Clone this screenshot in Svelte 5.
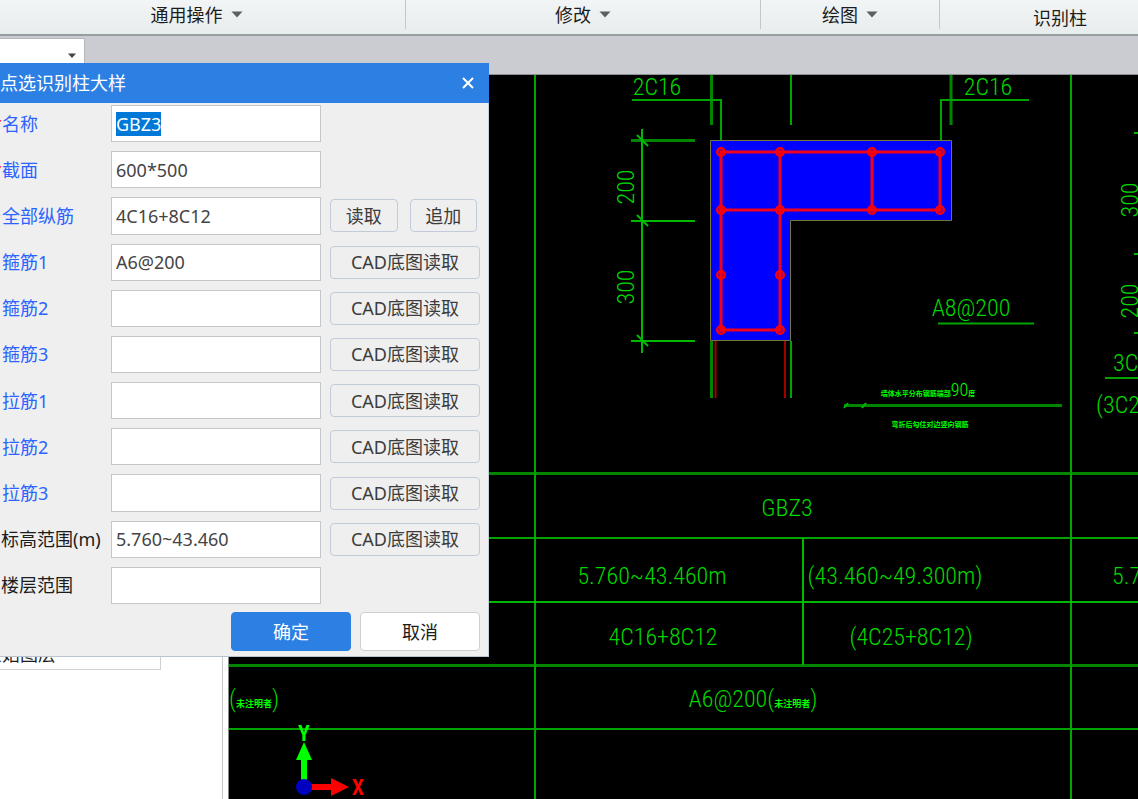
<script>
  const groups = [
    { name: '通用操作', menu: true },
    { name: '修改', menu: true },
    { name: '绘图', menu: true },
    { name: '识别柱', menu: false }
  ];

  const read = ['CAD底图读取'];
  let fields = $state([
    { id: 'name', label: '名称', required: true, value: 'GBZ3', actions: [] },
    { id: 'section', label: '截面', required: true, value: '600*500', actions: [] },
    { id: 'bars', label: '全部纵筋', value: '4C16+8C12', actions: ['读取', '追加'] },
    { id: 'stirrup1', label: '箍筋1', value: 'A6@200', actions: read },
    { id: 'stirrup2', label: '箍筋2', value: '', actions: read },
    { id: 'stirrup3', label: '箍筋3', value: '', actions: read },
    { id: 'tie1', label: '拉筋1', value: '', actions: read },
    { id: 'tie2', label: '拉筋2', value: '', actions: read },
    { id: 'tie3', label: '拉筋3', value: '', actions: read },
    { id: 'elevation', label: '标高范围(m)', plain: true, value: '5.760~43.460', actions: read },
    { id: 'floors', label: '楼层范围', plain: true, value: '', actions: [] }
  ]);

  const rebars = [
    [721, 152], [780, 152], [872, 152], [940, 152],
    [721, 210], [780, 210], [872, 210], [940, 210],
    [721, 275], [780, 275], [721, 330], [780, 330]
  ];

  // The name is selected when the dialog opens
  function selectAll(node, active) {
    if (active) {
      node.focus();
      node.select();
    }
  }
</script>

<div class="app">
  <header class="ribbon">
    {#each groups as g}
      <div class="group" class:low={!g.menu}>
        {#if g.menu}
          <button type="button">{g.name}
            <svg width="12" height="7" viewBox="0 0 12 7" aria-hidden="true"><path d="M0.5 0.5h11L6 6.5z" fill="#5d5f61" /></svg>
          </button>
        {:else}
          <span>{g.name}</span>
        {/if}
      </div>
    {/each}
  </header>

  <div class="toolbar">
    <div class="combo">
      <select aria-label="楼层"><option value=""></option></select>
      <svg width="8" height="5" viewBox="0 0 8 5" aria-hidden="true"><path d="M0 0.5h8L4 5z" fill="#444" /></svg>
    </div>
  </div>

  <main>
    <aside><div class="layer">原始图层</div></aside>
    <svg class="cad" viewBox="229 75 909 724" preserveAspectRatio="xMinYMin slice" role="img" aria-label="GBZ3">
      <g class="wide">
        <path d="M229 473.5H1138M229 665.5H1138M711.5 75V125M951 75V125M711.5 341V398M844 405.5H1062M631 140.5H695" />
      </g>
      <g class="line">
        <path d="M229 538H1138M229 729H1138M535 75V799M1071 75V799M791 75V125M791 341V398" />
        <path d="M632 100H721V140M1029 100H941V140M938 323.5H1034M1105 378H1138" />
      </g>
      <g class="hair">
        <path d="M229 602H1138M803 538V665M642 129V353M631 221H695M631 341H695" />
        <path d="M637 135L648 146M637 215L648 226M637 335L648 346M844 408L848 403M862 408L866 403M1134 133H1138M1134 254H1138M1134 333H1138" />
      </g>

      <path d="M715.5 341V398M785 341V398" stroke="#a00000" stroke-width="2" />
      <path d="M710.5 140.5H951.5V220.5H790.5V340.5H710.5z" fill="#0000ff" stroke="#77773c" />
      <g fill="none" stroke="#f0001c" stroke-width="3">
        <path d="M721 152H940V210H721zM721 152V330H780V152M872 152V210" />
      </g>
      {#each rebars as [x, y]}
        <circle cx={x} cy={y} r="4" fill="#ff0000" fill-opacity="0.6" stroke="#ff0000" stroke-width="2" />
      {/each}

      <g class="text">
        <text x="657" y="95">2C16</text>
        <text x="988" y="95">2C16</text>
        <text transform="translate(634 187) rotate(-90)">200</text>
        <text transform="translate(634 287) rotate(-90)">300</text>
        <text transform="translate(1138 200) rotate(-90)">300</text>
        <text transform="translate(1138 301) rotate(-90)">200</text>
        <text x="971" y="316">A8@200</text>
        <text class="start" x="1113" y="371">3C16</text>
        <text class="start" x="1096" y="413">(3C25)</text>
        <text x="787" y="516">GBZ3</text>
        <text x="652" y="584">5.760~43.460m</text>
        <text x="895" y="584">(43.460~49.300m)</text>
        <text class="start" x="1112" y="584">5.760~43.460m</text>
        <text x="663" y="645">4C16+8C12</text>
        <text x="911" y="645">(4C25+8C12)</text>
        <text x="753" y="707">A6@200(<tspan class="cn">未注明者</tspan>)</text>
        <text x="254" y="707">(<tspan class="cn">未注明者</tspan>)</text>
      </g>
      <g class="note">
        <text x="928" y="396">墙体水平分布钢筋端部<tspan class="num">90</tspan>度</text>
        <text x="930" y="427">弯折后勾住对边竖向钢筋</text>
      </g>

      <path d="M301 782V760H296L304 742L312 760H307V782z" fill="#00ff00" />
      <path d="M309 784H331V778L349 787L331 796V790H309z" fill="#ff0000" />
      <circle cx="304" cy="787" r="8" fill="#0000c0" />
      <text class="axis" x="304" y="741" fill="#00ff00">Y</text>
      <text class="axis" x="358" y="795" fill="#ff0000">X</text>
    </svg>
  </main>

  <form class="dialog" aria-labelledby="dlg-title" onsubmit={(e) => e.preventDefault()}>
    <div class="title">
      <h1 id="dlg-title">点选识别柱大样</h1>
      <button type="button" aria-label="关闭">
        <svg width="12" height="12" viewBox="0 0 12 12" aria-hidden="true"><path d="M1 1L11 11M11 1L1 11" stroke="#fff" stroke-width="2" /></svg>
      </button>
    </div>
    <div class="fields">
      {#each fields as f, i}
        <div class="row">
          <label for={f.id} class:plain={f.plain}><i>{f.required ? '*' : ''}</i>{f.label}</label>
          <input id={f.id} type="text" autocomplete="off" spellcheck="false" bind:value={f.value} use:selectAll={i === 0} />
          <div class="actions" class:pair={f.actions.length > 1}>
            {#each f.actions as a}<button type="button">{a}</button>{/each}
          </div>
        </div>
      {/each}
    </div>
    <div class="footer">
      <button type="submit" class="ok">确定</button>
      <button type="button" class="cancel">取消</button>
    </div>
  </form>
</div>

<style>
  :global(body) {
    margin: 0;
  }
  .app {
    position: relative;
    display: flex;
    flex-direction: column;
    height: 100vh;
    overflow: hidden;
    font: 18px/24px 'Noto Sans', 'Noto Sans CJK SC', sans-serif;
    color: #1c1c1c;
    background: #caccd1;
  }
  button,
  input,
  select {
    font: inherit;
    box-sizing: border-box;
  }

  .ribbon {
    display: grid;
    grid-template-columns: 418px 355px 179px 1fr;
    height: 34px;
    margin: 0 -43px 0 -12px;
    background: linear-gradient(#f2f5f6, #e7ecec);
    border-bottom: 2px solid #989da0;
    flex: none;
  }
  .group {
    display: flex;
    align-items: center;
    justify-content: center;
    height: 29px;
    border-right: 1px solid #c4c6c8;
  }
  .group.low {
    height: 36px;
  }
  .group button {
    display: flex;
    align-items: center;
    gap: 8px;
    padding: 0;
    border: 0;
    background: none;
    color: inherit;
  }
  .toolbar {
    flex: none;
    height: 36px;
    padding-top: 2px;
    border-bottom: 1px solid #8d9094;
  }
  .combo {
    position: relative;
    width: 85px;
    height: 32px;
  }
  .combo select {
    appearance: none;
    width: 100%;
    height: 100%;
    border: 1px solid #b4b6b9;
    border-width: 1px 1px 1px 0;
    border-radius: 0;
    background: #fff;
  }
  .combo svg {
    position: absolute;
    right: 9px;
    top: 15px;
    pointer-events: none;
  }

  main {
    flex: 1;
    display: flex;
    min-height: 0;
  }
  aside {
    box-sizing: border-box;
    flex: none;
    width: 223px;
    margin-right: 5px;
    padding-top: 566px;
    background: #fff;
    border-right: 1px solid #c9c9c9;
    box-shadow: 5px 0 0 #fff;
    overflow: hidden;
  }
  .layer {
    width: 176px;
    margin-left: -16px;
    padding-bottom: 3px;
    border: 1px solid #d0d0d0;
    border-left: 0;
  }
  .cad {
    flex: 1;
    min-width: 0;
    height: 100%;
    background: #000;
    border-left: 1px solid #8a8a8a;
  }
  .wide,
  .line,
  .hair {
    fill: none;
    stroke: #008500;
    stroke-width: 3;
  }
  .line {
    stroke: #00a400;
    stroke-width: 2;
  }
  .hair {
    stroke: #00b800;
    stroke-width: 2;
  }
  .text text,
  .note text {
    fill: #00d800;
    text-anchor: middle;
    font-family: 'Roboto Condensed', 'Liberation Sans Narrow', 'Noto Sans CJK SC', sans-serif;
    font-size: 24px;
    font-weight: 300;
  }
  .text .start {
    text-anchor: start;
  }
  .text .cn {
    fill: #00ff00;
    font-size: 9px;
    font-weight: 700;
  }
  .note text {
    fill: #00ff00;
    font-size: 7px;
    font-weight: 700;
  }
  .note .num {
    font-size: 18px;
    font-weight: 300;
  }
  .axis {
    font: 600 22px 'Roboto Condensed', 'Liberation Sans Narrow', sans-serif;
    text-anchor: middle;
  }

  .dialog {
    position: absolute;
    left: -10px;
    top: 63px;
    display: flex;
    flex-direction: column;
    box-sizing: border-box;
    width: 499px;
    height: 594px;
    background: #efefef;
    border-bottom: 1px solid #b9c3d2;
  }
  .title {
    flex: none;
    display: flex;
    align-items: center;
    justify-content: space-between;
    height: 40px;
    padding: 0 10px;
    background: #2d80e3;
    color: #fff;
  }
  h1 {
    margin: 0;
    font: inherit;
  }
  .title button {
    display: flex;
    padding: 5px;
    border: 0;
    background: none;
  }
  .fields {
    flex: 1;
    display: grid;
    grid-auto-rows: 1fr;
    gap: 9px;
    padding: 2px 8px 8px 4px;
    border-right: 1px solid #c6cfdc;
  }
  .row {
    display: grid;
    grid-template-columns: 108px 210px 150px;
    gap: 0 9px;
    min-height: 0;
  }
  label {
    display: flex;
    align-items: center;
    white-space: nowrap;
    color: #2b64ff;
  }
  label i {
    flex: none;
    width: 8px;
    font-size: 14px;
    font-style: normal;
    color: #f00;
  }
  label.plain {
    color: #1c1c1c;
  }
  label.plain i {
    width: 7px;
  }
  .row input {
    width: 100%;
    height: 100%;
    min-height: 0;
    padding: 0 4px;
    border: 1px solid #c4c7ca;
    border-radius: 0;
    outline: 0;
    background: #fff;
    color: #444;
  }
  .row input::selection {
    background: #0078d7;
    color: #fff;
  }
  .actions {
    display: grid;
    align-items: center;
  }
  .actions.pair {
    grid-template-columns: 1fr 1fr;
    gap: 12px;
    margin-right: 3px;
  }
  .actions button {
    height: 33px;
    padding: 0;
    border: 1px solid #c3cbdb;
    border-radius: 4px;
    background: #efefef;
    color: #3c3c3c;
  }
  .footer {
    flex: none;
    display: flex;
    justify-content: flex-end;
    gap: 9px;
    padding: 0 8px 5px 0;
    border-right: 1px solid #c6cfdc;
  }
  .footer button {
    width: 120px;
    height: 39px;
    border: 1px solid #cfcfcf;
    border-radius: 4px;
    background: #fff;
    color: #1c1c1c;
  }
  .footer .ok {
    border-color: #2d80e3;
    background: #2d80e3;
    color: #fff;
  }
</style>
